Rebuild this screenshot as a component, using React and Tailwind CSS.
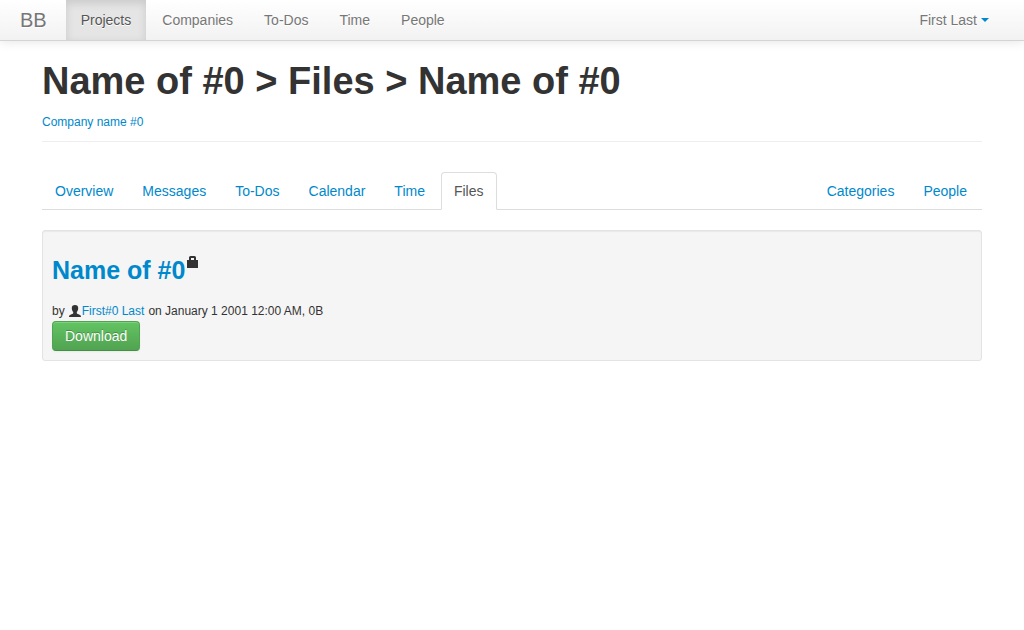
const mainLinks = ["Projects", "Companies", "To-Dos", "Time", "People"];
const tabs = ["Overview", "Messages", "To-Dos", "Calendar", "Time", "Files"];
const sideTabs = ["Categories", "People"];

function Navbar() {
  return (
    <nav className="flex h-[41px] border-b border-[#d4d4d4] bg-linear-to-b from-white to-[#f2f2f2] pr-5 text-[#777] shadow-[0_1px_10px_rgba(0,0,0,0.1)] [text-shadow:0_1px_0_#fff]">
      <a href="#" className="py-2.5 pr-[19px] pl-5 text-xl leading-5">BB</a>
      <ul className="flex gap-px">
        {mainLinks.map((label) => (
          <li key={label}>
            <a
              href="#"
              className={
                label === "Projects"
                  ? "block bg-[#e5e5e5] px-[15px] py-2.5 text-[#555] shadow-[inset_0_3px_8px_rgba(0,0,0,0.125)]"
                  : "block px-[15px] py-2.5"
              }
            >
              {label}
            </a>
          </li>
        ))}
      </ul>
      <button type="button" className="ml-auto flex items-center gap-1 px-[15px] [text-shadow:inherit]">
        First Last
        <svg aria-hidden="true" width="8" height="4" viewBox="0 0 8 4" fill="#0088cc">
          <path d="M0 0h8L4 4z" />
        </svg>
      </button>
    </nav>
  );
}

function Tab({ label, active }) {
  return (
    <li className="-mb-px">
      <a
        href="#"
        className={
          active
            ? "block rounded-t border border-[#ddd] border-b-white bg-white px-3 py-2 text-[#555]"
            : "block border border-transparent px-3 py-2 text-[#0088cc]"
        }
      >
        {label}
      </a>
    </li>
  );
}

function LockIcon() {
  return (
    <svg aria-hidden="true" width="11" height="12" viewBox="0 0 11 12" fill="#333">
      <path fillRule="evenodd" d="M2 4V1.500Q2 0 3.500 0h4Q9 0 9 1.500V4h2v8H0V4zM4 4h3V2H4z" />
    </svg>
  );
}

function UserIcon() {
  return (
    <svg aria-hidden="true" width="12" height="12" viewBox="0 0 12 12" fill="#333">
      <path d="M6 0C8.200 0 9.200 1.100 9.200 3c0 1.700-.5 3.200-1.400 4v1.300c.4.700 1.400 1 2.600 1.400C11.500 10.100 12 10.700 12 12H0c0-1.300.5-1.900 1.600-2.300C2.800 9.300 3.800 9 4.200 8.300V7C3.300 6.200 2.800 4.700 2.800 3 2.800 1.100 3.800 0 6 0z" />
    </svg>
  );
}

export default function App() {
  return (
    <div className="bg-white font-['Liberation_Sans',Arial,sans-serif] text-sm leading-5 text-[#333]">
      <Navbar />
      <main className="mx-auto max-w-[940px] pt-5">
        <header className="mb-[30px] border-b border-[#eee] pb-[9px]">
          <h1 className="mb-2.5 text-[38px] leading-10 font-bold">
            Name of #0 &gt; Files &gt; Name of #0
          </h1>
          <a href="#" className="block pt-px text-xs leading-5 text-[#0088cc]">Company name #0</a>
        </header>
        <ul className="mb-5 flex gap-[3px] border-b border-[#ddd]">
          {tabs.map((label) => (
            <Tab key={label} label={label} active={label === "Files"} />
          ))}
          <li className="ml-auto pr-0.5">
            <ul className="flex gap-[3px]">
              {sideTabs.map((label) => (
                <Tab key={label} label={label} />
              ))}
            </ul>
          </li>
        </ul>
        <section className="rounded-[3px] border border-[#e3e3e3] bg-[#f5f5f5] p-[9px] shadow-[inset_0_1px_1px_rgba(0,0,0,0.05)]">
          <h3 className="my-2.5 flex gap-0.5 text-[25px] leading-10 font-bold">
            <a href="#" className="text-[#0088cc]">Name of #0</a>
            <span className="pt-1.5 leading-3">
              <LockIcon />
            </span>
          </h3>
          <div className="flex items-center pt-px text-xs leading-5">
            <span className="mr-1">by</span>
            <UserIcon />
            <a href="#" className="mr-1 ml-px text-[#0088cc]">First#0 Last</a>
            <span>on January 1 2001 12:00 AM, 0B</span>
          </div>
          <button
            type="button"
            className="block rounded border border-[#51a351] border-b-[#429142] bg-linear-to-b from-[#62c462] to-[#51a351] px-3 py-1 text-white shadow-[inset_0_1px_0_rgba(255,255,255,0.2),0_1px_2px_rgba(0,0,0,0.05)] [text-shadow:0_-1px_0_rgba(0,0,0,0.25)]"
          >
            Download
          </button>
        </section>
      </main>
    </div>
  );
}
